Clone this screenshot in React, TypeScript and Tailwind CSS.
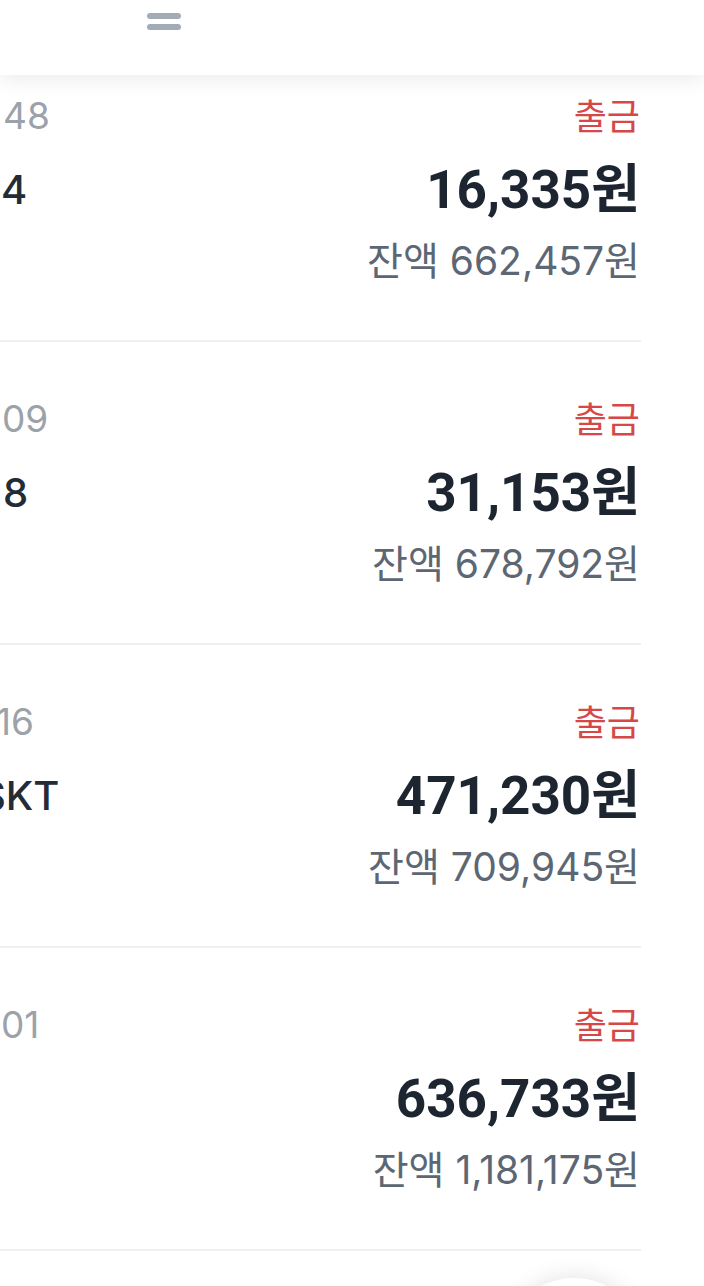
import React from "react";

type Row = {
  time: string;
  timeCls: string;
  name: string;
  nameCls: string;
  amount: string;
  balance: string;
};

const rows: Row[] = [
  { time: "48", timeCls: "pl-[3px]", name: "4", nameCls: "pl-[1px]", amount: "16,335원", balance: "잔액 662,457원" },
  { time: "09", timeCls: "pl-[2px]", name: "8", nameCls: "pl-[3px]", amount: "31,153원", balance: "잔액 678,792원" },
  { time: "16", timeCls: "-ml-[4px]", name: "SKT", nameCls: "-ml-[20px]", amount: "471,230원", balance: "잔액 709,945원" },
  { time: "01", timeCls: "pl-[1px]", name: "", nameCls: "pl-[3px]", amount: "636,733원", balance: "잔액 1,181,175원" },
  { time: "52", timeCls: "pl-[3px]", name: "", nameCls: "pl-[3px]", amount: "12,000원", balance: "잔액 1,817,908원" },
];

export default function App() {
  return (
    <div
      className="relative h-[1286px] w-[704px] overflow-hidden bg-white"
      style={{ fontFamily: "Inter, 'Noto Sans CJK KR', sans-serif" }}
    >
      <div className="relative z-10 flex h-[75px] w-full items-start bg-white shadow-[0_6px_18px_rgba(0,0,0,0.07)]">
        <div className="ml-[147px] mt-[13px] flex flex-col gap-[5px]">
          <div className="h-[6px] w-[34px] rounded-full bg-[#a3abb6]" />
          <div className="h-[6px] w-[34px] rounded-full bg-[#a3abb6]" />
        </div>
      </div>

      <div className="-mt-[36px] flex w-[641px] flex-col">
        {rows.map((r, i) => (
          <div key={i} className="flex flex-col">
            <div className="flex h-[301px] justify-between">
              <div className="flex flex-col pt-[55px] whitespace-nowrap">
                <div className={`h-[44px] text-[37px] leading-[44px] text-[#9ca2aa] ${r.timeCls}`}>{r.time}</div>
                <div className={`mt-[22px] h-[60px] text-[40px] font-medium leading-[60px] text-[#232b36] ${r.nameCls}`}>
                  {r.name}
                </div>
              </div>
              <div className="flex flex-col items-end pr-[1px] pt-[56px] whitespace-nowrap">
                <div className="h-[44px] text-[36px] leading-[44px] text-[#d64848]">출금</div>
                <div
                  className="mt-[21px] h-[60px] text-[53px] font-bold leading-[60px] text-[#1d2530]"
                  style={{ fontFamily: "Roboto, 'Noto Sans CJK KR', sans-serif" }}
                >
                  {r.amount}
                </div>
                <div className="mt-[17px] h-[48px] text-[39px] leading-[48px] text-[#5d6774]">{r.balance}</div>
              </div>
            </div>
            <div className="h-[2px] bg-[#efefef]" />
          </div>
        ))}
      </div>

      <div className="absolute left-[504px] top-[1278px] h-[140px] w-[140px] rounded-full bg-white shadow-[0_0_24px_rgba(0,0,0,0.12)]" />
    </div>
  );
}
